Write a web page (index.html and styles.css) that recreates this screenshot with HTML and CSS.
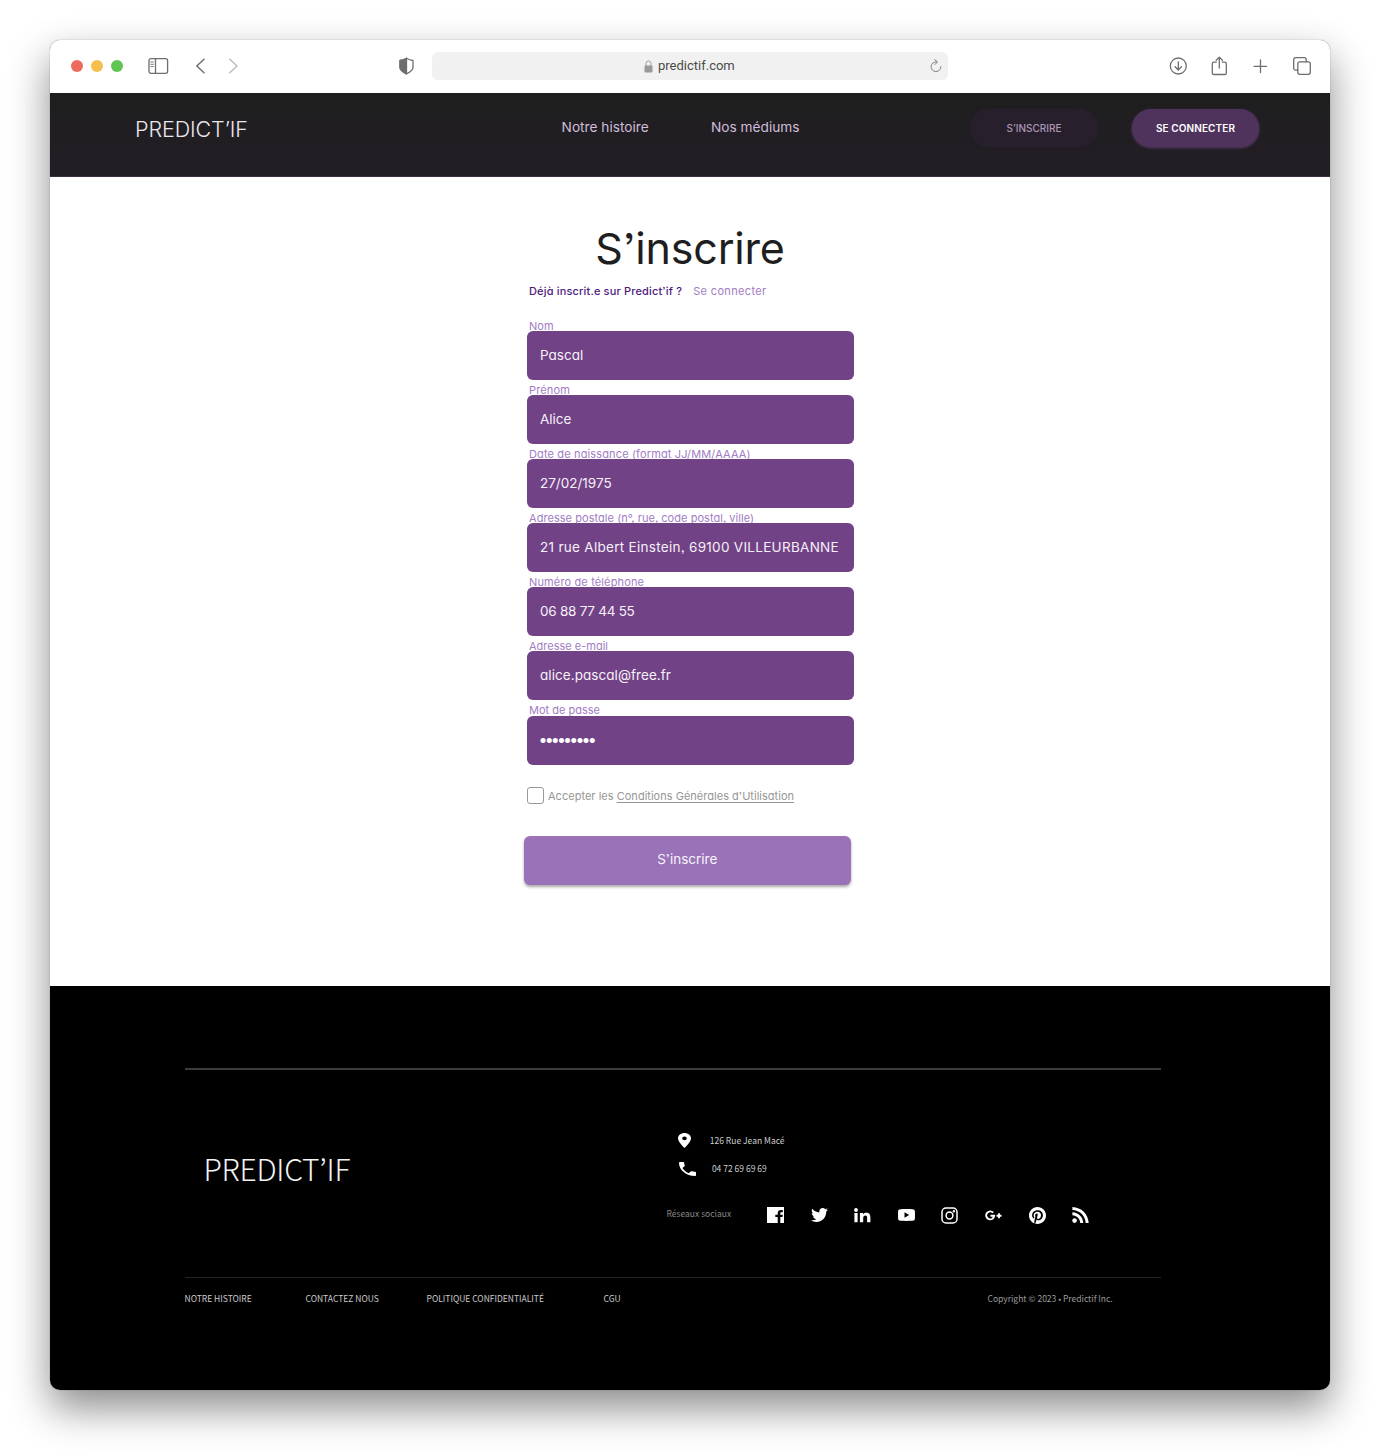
FILE: index.html
```html
<!DOCTYPE html>
<html lang="fr">
<head>
<meta charset="utf-8">
<title>Predict’if – S’inscrire</title>
<link rel="stylesheet" href="styles.css">
</head>
<body>
<div class="window">
  <div class="toolbar">
    <div class="lights"><span class="light red"></span><span class="light amber"></span><span class="light green"></span></div>
    <svg class="ic sidebar" width="20" height="16" viewBox="0 0 20 16"><rect x="1" y=".7" width="18.600" height="14.600" rx="2"/><path d="M7.500 1v14"/><path class="thin" d="M2.800 4h2.600M2.800 6.300h2.600M2.800 8.600h2.600"/></svg>
    <svg class="ic nav-arrow back" width="10" height="16" viewBox="0 0 10 16"><path d="M9 1.200 1.800 8 9 14.800"/></svg>
    <svg class="ic nav-arrow fwd" width="10" height="16" viewBox="0 0 10 16"><path d="M1.800 1.200 9 8l-7.200 6.800"/></svg>
    <svg class="ic shield" width="16" height="18" viewBox="0 0 16 18"><path d="M8.500 1.200c2 1.300 4 2 6.500 2.300v6.800c0 3-3 5-6.500 6.600C5 15.300 2 13.300 2 10.300V3.500C4.500 3.200 6.500 2.500 8.500 1.200z"/><path class="solid" d="M8.500 1.200v15.700C5 15.300 2 13.300 2 10.300V3.500C4.500 3.200 6.500 2.500 8.500 1.200z"/></svg>
    <div class="address">
      <svg class="lock" width="9" height="13" viewBox="0 0 9 13"><rect x=".5" y="5.500" width="8" height="7" rx="1" fill="#999"/><path d="M2 6V3.500a2.500 2.500 0 0 1 5 0V6" fill="none" stroke="#999"/></svg>
      <span class="url">predictif.com</span>
      <svg class="ic reload" width="12" height="14" viewBox="0 0 12 14"><path d="M6.500 2.800A4.900 4.900 0 1 0 10.900 7.700M4.700.6l2.800 2.300-2.500 2.600"/></svg>
    </div>
    <svg class="ic down" width="18" height="18" viewBox="0 0 18 18"><circle cx="9.300" cy="9" r="8"/><path d="M9.300 4.800v8M6.100 9.800 9.300 13l3.200-3.200"/></svg>
    <svg class="ic share" width="16" height="20" viewBox="0 0 16 20"><path d="M5.300 6.200H2.900a1.600 1.600 0 0 0-1.600 1.600v9.100a1.600 1.600 0 0 0 1.600 1.600h10.800a1.600 1.600 0 0 0 1.600-1.600V7.800a1.600 1.600 0 0 0-1.600-1.600h-2.400M8.300 12V1.200M5.200 4.200l3.100-3.100 3.100 3.100"/></svg>
    <svg class="ic plus" width="14" height="14" viewBox="0 0 14 14"><path d="M7.500 1v12.500M1 7.300h12.500"/></svg>
    <svg class="ic tabs" width="18" height="18" viewBox="0 0 18 18"><rect x="4.800" y="4.800" width="12.500" height="12.500" rx="2"/><path d="M4.800 13.200H2.700a2 2 0 0 1-2-2V2.700a2 2 0 0 1 2-2h8.500a2 2 0 0 1 2 2v2.100"/></svg>
  </div>

  <header class="site-header">
    <a class="brand">PREDICT’IF</a>
    <a class="nav">Notre histoire</a>
    <a class="nav">Nos médiums</a>
    <a class="pill ghost">S’INSCRIRE</a>
    <a class="pill primary">SE CONNECTER</a>
  </header>

  <main class="main">
    <h1 class="title">S’inscrire</h1>
    <p class="already"><span class="question">Déjà inscrit.e sur Predict’if ?</span><a class="login">Se connecter</a></p>
    <form class="form">
      <label class="field"><span class="label">Nom</span><span class="box">Pascal</span></label>
      <label class="field"><span class="label wide">Prénom</span><span class="box">Alice</span></label>
      <label class="field"><span class="label wide">Date de naissance (format JJ/MM/AAAA)</span><span class="box">27/02/1975</span></label>
      <label class="field"><span class="label address-label">Adresse postale (n°, rue, code postal, ville)</span><span class="box postal">21 rue Albert Einstein, 69100 VILLEURBANNE</span></label>
      <label class="field"><span class="label wide">Numéro de téléphone</span><span class="box phone">06 88 77 44 55</span></label>
      <label class="field"><span class="label">Adresse e-mail</span><span class="box email">alice.pascal@free.fr</span></label>
      <label class="field"><span class="label">Mot de passe</span><span class="box password">•••••••••</span></label>
    </form>
    <div class="terms"><span class="check"></span><span class="accept">Accepter les <a class="cgu">Conditions Générales d’Utilisation</a></span></div>
    <div class="submit">S’inscrire</div>
  </main>

  <footer class="footer">
    <div class="inner">
      <div class="top">
        <span class="foot-brand">PREDICT’IF</span>
        <div class="contact">
          <div class="line addr"><svg width="13" height="15" viewBox="5 2 14 20" preserveAspectRatio="none"><path d="M12 2C8.130 2 5 5.130 5 9c0 5.250 7 13 7 13s7-7.750 7-13c0-3.870-3.130-7-7-7zm0 9.500a2.500 2.500 0 0 1 0-5 2.500 2.500 0 0 1 0 5z"/></svg><span>126 Rue Jean Macé</span></div>
          <div class="line tel"><svg width="17" height="14" viewBox="3 3 18 18" preserveAspectRatio="none"><path d="M6.620 10.790c1.440 2.830 3.760 5.140 6.590 6.590l2.200-2.200c.27-.27.670-.36 1.020-.24 1.120.37 2.330.57 3.570.57.550 0 1 .45 1 1V20c0 .55-.45 1-1 1-9.390 0-17-7.610-17-17 0-.55.450-1 1-1h3.500c.55 0 1 .45 1 1 0 1.250.2 2.450.57 3.570.11.350.03.740-.25 1.020l-2.200 2.200z"/></svg><span>04 72 69 69 69</span></div>
          <div class="social">
            <span class="social-label">Réseaux sociaux</span>
            <div class="icons">
              <svg width="17" height="16" viewBox="0 0 17 16"><path d="M0 0h17v16h-3.700v-6h2.200l.3-2.300h-2.500V6.400c0-.8.3-1.200 1.200-1.200h1.300V3c-.4-.1-1-.1-1.700-.1-2.100 0-3.400 1.100-3.400 3.200v1.600H8.300V10h2.400v6H0z"/></svg>
              <svg width="17" height="14" viewBox="1.500 4 21 17"><path d="M22.460 6c-.77.35-1.600.58-2.460.69.880-.53 1.560-1.370 1.880-2.380-.83.500-1.750.85-2.720 1.050C18.370 4.500 17.260 4 16 4c-2.350 0-4.270 1.920-4.270 4.290 0 .34.040.67.110.98C8.280 9.090 5.110 7.380 3 4.790c-.37.63-.58 1.370-.58 2.150 0 1.490.75 2.810 1.910 3.560-.71 0-1.370-.2-1.950-.5v.03c0 2.080 1.480 3.820 3.440 4.210-.63.170-1.290.2-1.940.07.540 1.720 2.140 2.950 4.010 2.980-1.460 1.160-3.310 1.840-5.330 1.830-.34 0-.68-.02-1.020-.06C3.440 20.290 5.700 21 8.120 21 16 21 20.330 14.460 20.330 8.790c0-.19 0-.37-.01-.56.840-.6 1.560-1.360 2.140-2.230z"/></svg>
              <svg width="17" height="15" viewBox="0 0 17 15"><circle cx="2" cy="2" r="1.900"/><path d="M.4 5h3.200v9.300H.4zM5.900 5H9v1.300c.5-.8 1.600-1.500 3.200-1.500 3.300 0 4.200 2 4.200 4.700v4.800h-3.300v-4.400c0-1.300-.3-2.300-1.700-2.300-1.500 0-2.200 1-2.200 2.400v4.300H5.900z"/></svg>
              <svg width="17" height="12" viewBox="0 0 17 12"><path d="M2.500.2C6 0 11 0 14.500.2 16.200.3 16.800 1 16.900 2.500c.1 2 .1 5 0 7-.1 1.500-.7 2.200-2.400 2.300-3.500.2-8.500.2-12 0C.8 11.700.2 11 .1 9.500 0 7.500 0 4.500.1 2.500.2 1 .8.3 2.500.2zM6.500 3.300v5.400L11.200 6z"/></svg>
              <svg class="outline" width="17" height="17" viewBox="0 0 17 17"><rect x="1" y="1" width="15" height="15" rx="4"/><circle cx="8.500" cy="8.500" r="3.400"/><circle cx="12.900" cy="4.200" r=".5"/></svg>
              <svg class="outline gplus" width="17" height="11" viewBox="0 0 17 11"><path d="M8.200 2.700A4 4 0 1 0 9.200 5.700H5.400M14 3.200v5M11.500 5.700h5"/></svg>
              <svg width="17" height="17" viewBox="0 0 24 24"><path d="M12 0C5.373 0 0 5.372 0 12c0 5.084 3.163 9.426 7.627 11.174-.105-.949-.2-2.405.042-3.441.218-.937 1.407-5.965 1.407-5.965s-.359-.719-.359-1.782c0-1.668.967-2.914 2.171-2.914 1.023 0 1.518.769 1.518 1.690 0 1.029-.655 2.568-.994 3.995-.283 1.194.599 2.169 1.777 2.169 2.133 0 3.772-2.249 3.772-5.495 0-2.873-2.064-4.882-5.012-4.882-3.414 0-5.418 2.561-5.418 5.207 0 1.031.397 2.138.893 2.738.098.119.112.224.083.345l-.333 1.360c-.053.220-.174.267-.402.161-1.499-.698-2.436-2.889-2.436-4.649 0-3.785 2.750-7.262 7.929-7.262 4.163 0 7.398 2.967 7.398 6.931 0 4.136-2.607 7.464-6.227 7.464-1.216 0-2.359-.631-2.750-1.378l-.748 2.853c-.271 1.043-1.002 2.350-1.492 3.146C9.570 23.812 10.763 24 12 24c6.627 0 12-5.373 12-12 0-6.628-5.373-12-12-12z"/></svg>
              <svg width="17" height="16" viewBox="0 0 17 16"><circle cx="2.600" cy="13.600" r="2.300"/><path d="M.4 0C9.500.4 16.200 7 16.700 16h-3C13.200 8.600 7.900 3.400.4 3zM.4 5.300C6.500 5.700 11 10 11.300 16h-3C8 11.700 4.800 8.600.4 8.300z"/></svg>
            </div>
          </div>
        </div>
      </div>
      <div class="bottom"><a>NOTRE HISTOIRE</a><a>CONTACTEZ NOUS</a><a>POLITIQUE CONFIDENTIALITÉ</a><a>CGU</a><span class="copy">Copyright © 2023 • Predictif Inc.</span></div>
    </div>
  </footer>
</div>
</body>
</html>
```
FILE: styles.css
```css
* { box-sizing: border-box; }

body {
  margin: 0;
  padding: 40px 50px 60px;
  background: #fff;
  font-family: Inter, "Liberation Sans", sans-serif;
}

svg { display: block; flex: none; }

.window {
  width: 1280px;
  height: 1350px;
  border-radius: 10px;
  overflow: hidden;
  background: #fff;
  box-shadow: 0 0 1px rgba(0, 0, 0, .6), 0 18px 40px rgba(0, 0, 0, .46);
}

/* Browser toolbar */
.toolbar { height: 53px; padding: 0 0 1px 21px; display: flex; align-items: center; }
.lights { display: flex; gap: 8px; }
.light { width: 12px; height: 12px; border-radius: 50%; }
.red { background: #ed6a5e; }
.amber { background: #f5bf4f; }
.green { background: #61c554; }
.ic { fill: none; stroke: #6e6e6e; stroke-width: 1.3; stroke-linecap: round; stroke-linejoin: round; overflow: visible; }
.thin { stroke-width: .9; }
.ic .solid { fill: #6e6e6e; }
.sidebar { margin-left: 25px; }
.nav-arrow { stroke-width: 1.500; }
.back { margin-left: 27px; }
.fwd { margin-left: 23px; stroke: #bcbcbc; }
.shield { margin-left: 160px; }
.address {
  width: 516px;
  height: 28px;
  margin-left: 18px;
  padding: 0 6px 0 212px;
  border-radius: 6px;
  background: #f1f1f1;
  display: flex;
  align-items: center;
}
.url { margin-left: 5px; font: 13px/28px Roboto, sans-serif; color: #4a4a4a; }
.reload { margin-left: auto; stroke: #808080; stroke-width: 1; }
.down { margin-left: 221px; }
.share { margin-left: 24px; }
.plus { margin-left: 26px; }
.tabs { margin-left: 25.500px; }

/* Site header */
.site-header {
  height: 84px;
  padding: 16px 0 0 85px;
  border-bottom: 1px solid #3a3040;
  background: linear-gradient(#1e1e1e, #231e26);
  display: grid;
  grid-template-columns: 426.600px 149.400px 259px 162px 127px;
  align-items: start;
}
.brand { margin-top: 7px; font-size: 21.500px; font-weight: 300; line-height: 26px; letter-spacing: -.1px; color: #ebe6ec; }
.nav { margin-top: 8px; font-size: 13.700px; line-height: 20px; color: #d0bddb; }
.pill {
  height: 38px;
  border-radius: 19px;
  font-size: 10px;
  line-height: 38px;
  text-align: center;
}
.ghost { width: 128px; background: #271f2b; box-shadow: 0 0 3px #271f2b; font-weight: 500; color: #ab97b6; }
.primary { width: 127px; background: #4f335c; box-shadow: 0 1px 3px #5a3a69; font-weight: 600; letter-spacing: .1px; color: #fff; }

/* Sign-up form */
.main { height: 808.500px; padding-top: 44px; font-feature-settings: "cv11", "ss03"; }
.title { margin: 0; font-size: 43px; font-weight: 430; line-height: 54px; letter-spacing: -.2px; text-align: center; color: #1e1e1e; }
.already { margin: 8px 0 0 479px; display: flex; gap: 11px; font-size: 11px; line-height: 16px; }
.question { font-weight: 500; letter-spacing: .160px; color: #4e1a80; }
.login { letter-spacing: .34px; color: #a27cc4; }
.form { width: 327px; margin: 17px 0 0 476.500px; }
.field { display: block; height: 64.100px; }
.label {
  display: block;
  height: 15px;
  padding: 2.500px 0 0 2.500px;
  font-size: 11px;
  line-height: 15px;
  color: #a27cc4;
}
.wide { letter-spacing: .14px; }
.address-label { letter-spacing: .05px; }
/* The field sits above the descenders of its label */
.box {
  position: relative;
  display: block;
  height: 49px;
  padding-left: 13.500px;
  border-radius: 6px;
  background: #724286;
  font-size: 13.500px;
  line-height: 49.600px;
  white-space: nowrap;
  color: #f6f1f8;
}
.postal { letter-spacing: .290px; }
.phone { letter-spacing: -.260px; }
.email { line-height: 48.500px; letter-spacing: .06px; }
.password { padding-left: 12px; font-size: 16px; line-height: 47px; letter-spacing: -2.850px; color: #fff; }
.terms { margin: 22px 0 0 476.500px; display: flex; align-items: center; gap: 4.500px; font-size: 11px; line-height: 17px; color: #969696; }
.check { width: 17px; height: 17px; border: 1.500px solid #999; border-radius: 3px; }
.accept { padding-top: 1px; letter-spacing: .02px; }
.cgu { text-decoration: underline; text-decoration-thickness: 1px; text-underline-offset: 2px; text-decoration-skip-ink: none; }
.submit {
  width: 327.500px;
  height: 49px;
  margin: 31px 0 0 473.500px;
  border-radius: 6px;
  background: #9972b8;
  box-shadow: 0 2px 3px rgba(0, 0, 0, .35);
  font-size: 13.500px;
  line-height: 46px;
  text-align: center;
  color: #f8f4fb;
}

/* Footer */
.footer {
  height: 405px;
  padding: 82.500px 0 0 134.500px;
  background: #000;
  font: 8.500px/14px "Noto Sans CJK JP", "Noto Sans", sans-serif;
  color: #ccc;
}
.inner { width: 976.500px; border-top: 2px solid #3c3c3c; }
.top { height: 207px; display: grid; grid-template-columns: 482px 1fr; align-items: start; }
.foot-brand { padding: 78px 0 0 19px; font-size: 30px; font-weight: 300; line-height: 40px; letter-spacing: -.280px; color: #f2f2f2; }
.contact { padding-top: 63.500px; fill: #fff; }
.line { height: 14px; display: flex; align-items: center; }
.line span { margin-top: -2px; }
.addr { padding-left: 11px; gap: 19.300px; }
.tel { margin-top: 14px; padding-left: 12px; gap: 16.400px; }
.social { height: 20px; margin-top: 29.500px; display: flex; align-items: center; }
.social-label { width: 100.500px; margin-top: -4px; color: #8a8a8a; }
.icons { display: flex; align-items: center; gap: 26.600px; }
.outline { fill: none; stroke: #fff; stroke-width: 1.500; }
.gplus { stroke-width: 1.900; }
.bottom { padding-top: 13px; border-top: 1px solid #242424; display: grid; grid-template-columns: 121px 121px 177px 384px auto; }
.copy { color: #9c9c9c; }
```
